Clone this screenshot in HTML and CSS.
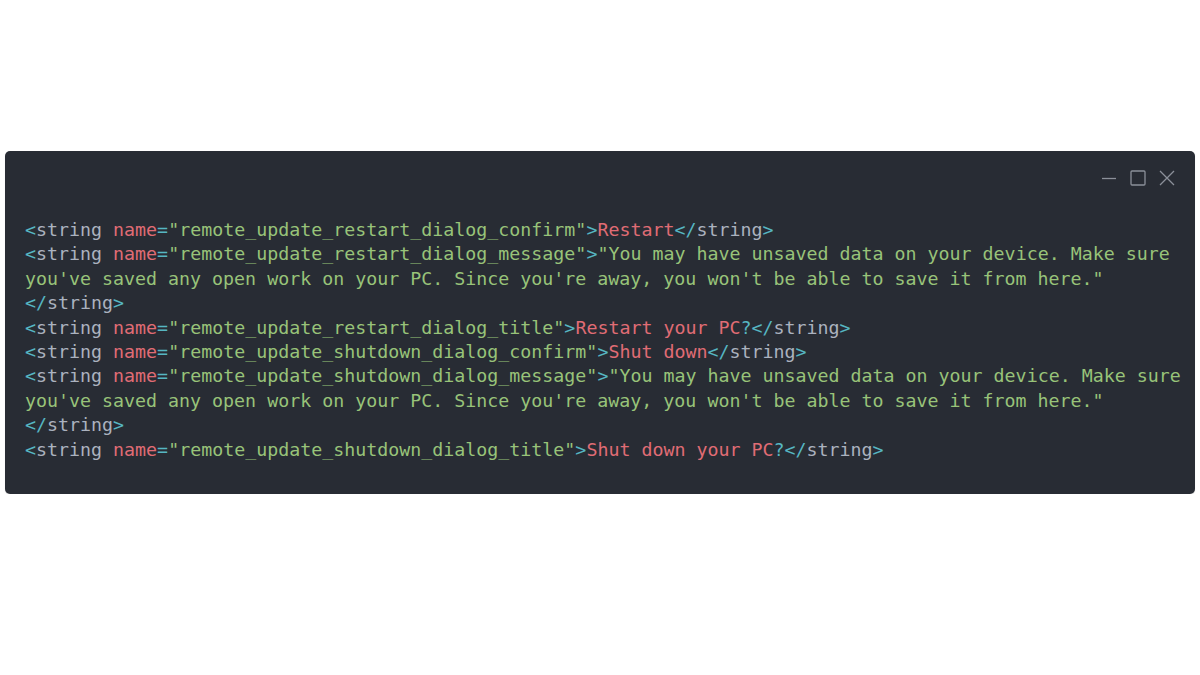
FILE: index.html
```html
<!DOCTYPE html>
<html>
<head>
<meta charset="utf-8">
<link rel="stylesheet" href="styles.css">
</head>
<body>
<div class="window">
  <div class="controls">
    <svg class="ctl" width="16" height="16" viewBox="0 0 16 16"><path d="M1 8.5H15" /></svg>
    <svg class="ctl" width="16" height="16" viewBox="0 0 16 16"><rect x="1" y="1" width="14" height="14" rx="1" /></svg>
    <svg class="ctl" width="16" height="16" viewBox="0 0 16 16"><path d="M1 1L15 15M15 1L1 15" /></svg>
  </div>
<pre class="code"><span class="p">&lt;</span><span class="t">string</span> <span class="a">name</span><span class="p">=</span><span class="s">"remote_update_restart_dialog_confirm"</span><span class="p">&gt;</span><span class="c">Restart</span><span class="p">&lt;/</span><span class="t">string</span><span class="p">&gt;</span>
<span class="p">&lt;</span><span class="t">string</span> <span class="a">name</span><span class="p">=</span><span class="s">"remote_update_restart_dialog_message"</span><span class="p">&gt;</span><span class="s">"You may have unsaved data on your device. Make sure</span>
<span class="s">you've saved any open work on your PC. Since you're away, you won't be able to save it from here."</span>
<span class="p">&lt;/</span><span class="t">string</span><span class="p">&gt;</span>
<span class="p">&lt;</span><span class="t">string</span> <span class="a">name</span><span class="p">=</span><span class="s">"remote_update_restart_dialog_title"</span><span class="p">&gt;</span><span class="c">Restart your PC</span><span class="p">?&lt;/</span><span class="t">string</span><span class="p">&gt;</span>
<span class="p">&lt;</span><span class="t">string</span> <span class="a">name</span><span class="p">=</span><span class="s">"remote_update_shutdown_dialog_confirm"</span><span class="p">&gt;</span><span class="c">Shut down</span><span class="p">&lt;/</span><span class="t">string</span><span class="p">&gt;</span>
<span class="p">&lt;</span><span class="t">string</span> <span class="a">name</span><span class="p">=</span><span class="s">"remote_update_shutdown_dialog_message"</span><span class="p">&gt;</span><span class="s">"You may have unsaved data on your device. Make sure</span>
<span class="s">you've saved any open work on your PC. Since you're away, you won't be able to save it from here."</span>
<span class="p">&lt;/</span><span class="t">string</span><span class="p">&gt;</span>
<span class="p">&lt;</span><span class="t">string</span> <span class="a">name</span><span class="p">=</span><span class="s">"remote_update_shutdown_dialog_title"</span><span class="p">&gt;</span><span class="c">Shut down your PC</span><span class="p">?&lt;/</span><span class="t">string</span><span class="p">&gt;</span></pre>
</div>
</body>
</html>
```
FILE: styles.css
```css
html, body {
  margin: 0;
  padding: 0;
  background: #ffffff;
}
body {
  padding: 151px 5px 0 5px;
}
.window {
  background: #282c34;
  border-radius: 5px;
  padding: 17px 20px 32px 20px;
  box-shadow: 0 1px 1px rgba(0,0,0,0.15);
}
.controls {
  display: flex;
  justify-content: flex-end;
  align-items: center;
  gap: 13px;
  height: 20px;
  padding-right: 0;
}
.ctl {
  fill: none;
  stroke: #8b9099;
  stroke-width: 1.3;
}
.code {
  margin: 30px 0 0 0;
  font-family: "DejaVu Sans Mono", monospace;
  font-size: 18.3px;
  line-height: 24.4px;
  color: #abb2bf;
  white-space: pre;
}
.p { color: #56b6c2; }
.t { color: #abb2bf; }
.a { color: #e06c75; }
.s { color: #98c379; }
.c { color: #e06c75; }
```
